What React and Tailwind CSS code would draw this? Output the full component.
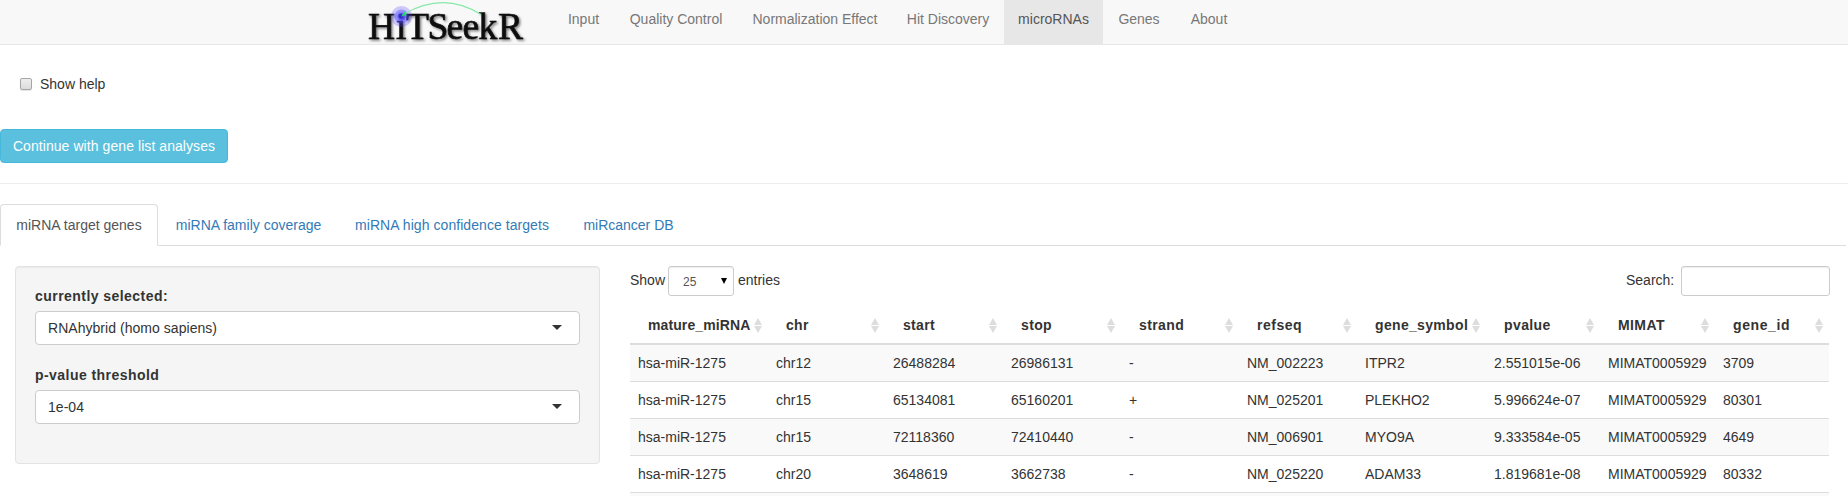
const navItems = [
  { label: 'Input', width: 'w-[61px]' },
  { label: 'Quality Control', width: 'w-[124px]' },
  { label: 'Normalization Effect', width: 'w-[154px]' },
  { label: 'Hit Discovery', width: 'w-[112px]' },
  { label: 'microRNAs', width: 'w-[99px]', active: true },
  { label: 'Genes', width: 'w-[72px]' },
  { label: 'About', width: 'w-[68px]' },
];

const tabs = [
  { label: 'miRNA target genes', width: 'w-[158px]', active: true },
  { label: 'miRNA family coverage', width: 'w-[177px]' },
  { label: 'miRNA high confidence targets', width: 'w-[226px]', tracking: 'tracking-[0.06px]' },
  { label: 'miRcancer DB', width: 'w-[123px]' },
];

const columns = [
  { name: 'mature_miRNA', width: 'w-[138px]', tracking: 'tracking-[0.1px]' },
  { name: 'chr', width: 'w-[117px]', tracking: 'tracking-[0.3px]' },
  { name: 'start', width: 'w-[118px]', tracking: 'tracking-[0.3px]' },
  { name: 'stop', width: 'w-[118px]', tracking: 'tracking-[0.35px]' },
  { name: 'strand', width: 'w-[118px]', tracking: 'tracking-[0.4px]' },
  { name: 'refseq', width: 'w-[118px]', tracking: 'tracking-[0.5px]' },
  { name: 'gene_symbol', width: 'w-[129px]', tracking: 'tracking-[0.33px]' },
  { name: 'pvalue', width: 'w-[114px]', tracking: 'tracking-[0.4px]' },
  { name: 'MIMAT', width: 'w-[115px]', tracking: 'tracking-[0.4px]' },
  { name: 'gene_id', width: 'w-[114px]', tracking: 'tracking-[0.6px]' },
];

const rows = [
  ['hsa-miR-1275', 'chr12', '26488284', '26986131', '-', 'NM_002223', 'ITPR2', '2.551015e-06', 'MIMAT0005929', '3709'],
  ['hsa-miR-1275', 'chr15', '65134081', '65160201', '+', 'NM_025201', 'PLEKHO2', '5.996624e-07', 'MIMAT0005929', '80301'],
  ['hsa-miR-1275', 'chr15', '72118360', '72410440', '-', 'NM_006901', 'MYO9A', '9.333584e-05', 'MIMAT0005929', '4649'],
  ['hsa-miR-1275', 'chr20', '3648619', '3662738', '-', 'NM_025220', 'ADAM33', '1.819681e-08', 'MIMAT0005929', '80332'],
];

function Logo() {
  return (
    <svg width="170" height="44" viewBox="0 0 170 44" className="block shrink-0 overflow-visible">
      <defs>
        <filter id="logo-shadow" x="-10%" y="-10%" width="120%" height="140%">
          <feDropShadow dx="1.5" dy="1.5" stdDeviation="1" floodColor="#000" floodOpacity="0.5" />
        </filter>
      </defs>
      <text
        x="8 36 46 67.5 86.5 102.5 118.5 138"
        y="39"
        fontSize="37.5"
        fill="#111"
        stroke="#111"
        strokeWidth="0.7"
        filter="url(#logo-shadow)"
        className="font-['Palatino_Linotype','Liberation_Serif',serif]"
      >
        HiTSeekR
      </text>
      <circle cx="41.5" cy="16.5" r="10.5" fill="#5a50ff" fillOpacity="0.28" />
      <circle cx="41.5" cy="16.5" r="7" fill="#4a40ff" fillOpacity="0.4" />
      <circle cx="41.5" cy="16.5" r="4" fill="#3028f0" fillOpacity="0.45" />
      <path d="M44 14 Q84 -9 121 14.5" fill="none" stroke="#86e8a6" strokeWidth="1.1" />
      <path d="M41 16.5 L44.5 11.5 L46.5 15.2 Z" fill="#1fd86a" />
    </svg>
  );
}

function SelectBox({ label, value }) {
  return (
    <div className="mb-[15px]">
      <div className="mb-[5px] h-5 font-bold tracking-[0.45px]">{label}</div>
      <div className="flex h-[34px] items-center justify-between rounded border border-[#ccc] bg-white pr-[17px] pl-3">
        <span className="tracking-[0.04px]">{value}</span>
        <svg width="10" height="5" viewBox="0 0 10 5" className="mb-0.5">
          <path d="M0 0H10L5 5Z" fill="#333" />
        </svg>
      </div>
    </div>
  );
}

function SortIcon() {
  return (
    <svg width="8" height="15" viewBox="0 0 8 15" className="shrink-0">
      <path d="M4 0L8 7H0Z M0 8H8L4 15Z" fill="#ddd" />
    </svg>
  );
}

export default function App() {
  return (
    <div className="h-[496px] w-full overflow-hidden bg-white font-['Liberation_Sans',Arial,sans-serif] text-[14px] leading-5 text-[#333]">
      <nav className="flex h-[45px] border-b border-[#e7e7e7] bg-[#f8f8f8] pl-[360px]">
        <Logo />
        <ul className="ml-[23px] flex">
          {navItems.map((n) => (
            <li
              key={n.label}
              className={`${n.width} pt-[9px] text-center whitespace-nowrap ${n.active ? 'bg-[#e7e7e7] text-[#555]' : 'text-[#777]'}`}
            >
              {n.label}
            </li>
          ))}
        </ul>
      </nav>

      <label className="mt-[29px] flex h-5 items-center pl-5">
        <span className="size-3 rounded-[2px] border border-[#a5a5a5] bg-linear-to-b from-[#eee] to-[#dcdcdc] shadow-[0_1px_1px_rgba(0,0,0,0.1)]" />
        <span className="ml-2">Show help</span>
      </label>

      <button className="mt-[35px] block h-[34px] w-[228px] rounded border border-[#46b8da] bg-[#5bc0de] text-center tracking-[0.07px] whitespace-nowrap text-white">
        Continue with gene list analyses
      </button>

      <div className="mt-5 border-t border-[#eee]" />

      <div className="mt-5 mr-0.5 flex h-[42px] border-b border-[#ddd]">
        {tabs.map((t) => (
          <div
            key={t.label}
            className={`${t.width} ${t.tracking ?? ''} mr-0.5 h-[42px] rounded-t border pt-[10px] text-center whitespace-nowrap ${
              t.active ? 'border-[#ddd] border-b-white bg-white text-[#555]' : 'border-transparent text-[#337ab7]'
            }`}
          >
            {t.label}
          </div>
        ))}
      </div>

      <div className="mt-5 flex items-start pl-[15px]">
        <div className="h-[198px] w-[585px] rounded border border-[#e3e3e3] bg-[#f5f5f5] p-[19px] shadow-[inset_0_1px_1px_rgba(0,0,0,0.05)]">
          <SelectBox label="currently selected:" value="RNAhybrid (homo sapiens)" />
          <div className="h-[5px]" />
          <SelectBox label="p-value threshold" value="1e-04" />
        </div>

        <div className="ml-[30px] w-[1200px]">
          <div className="flex h-[30px] justify-between">
            <div className="flex">
              <span className="w-[38px] pt-1">Show</span>
              <span className="flex h-[30px] w-[66px] items-center justify-between rounded-[3px] border border-[#ccc] pr-[6px] pl-[14px] text-[12px] text-[#555] shadow-[inset_0_1px_1px_rgba(0,0,0,0.075)]">
                <span className="pt-px">25</span>
                <svg width="6" height="6" viewBox="0 0 6 6" className="mb-px">
                  <path d="M0 0H6L3 6Z" fill="#000" />
                </svg>
              </span>
              <span className="ml-1 pt-1">entries</span>
            </div>
            <div className="flex">
              <span className="w-[55px] pt-1">Search:</span>
              <span className="h-[30px] w-[149px] rounded-[3px] border border-[#ccc] shadow-[inset_0_1px_1px_rgba(0,0,0,0.075)]" />
            </div>
          </div>

          <div className="mt-[10px] w-[1199px]">
            <div className="flex h-[39px] border-b-2 border-[#ddd]">
              {columns.map((c) => (
                <div key={c.name} className={`${c.width} flex items-start justify-between pt-[9px] pr-[6px] pl-[18px] font-bold`}>
                  <span className={c.tracking}>{c.name}</span>
                  <span className="pt-[3px]"><SortIcon /></span>
                </div>
              ))}
            </div>
            {rows.map((r, i) => (
              <div key={i} className={`flex h-[37px] border-b border-[#ddd] ${i % 2 === 0 ? 'bg-[#f9f9f9]' : 'bg-white'}`}>
                {r.map((cell, j) => (
                  <div key={j} className={`${columns[j].width} pt-2 pl-2 whitespace-nowrap`}>
                    {cell}
                  </div>
                ))}
              </div>
            ))}
            <div className="h-[4px] bg-[#f9f9f9]" />
          </div>
        </div>
      </div>
    </div>
  );
}
